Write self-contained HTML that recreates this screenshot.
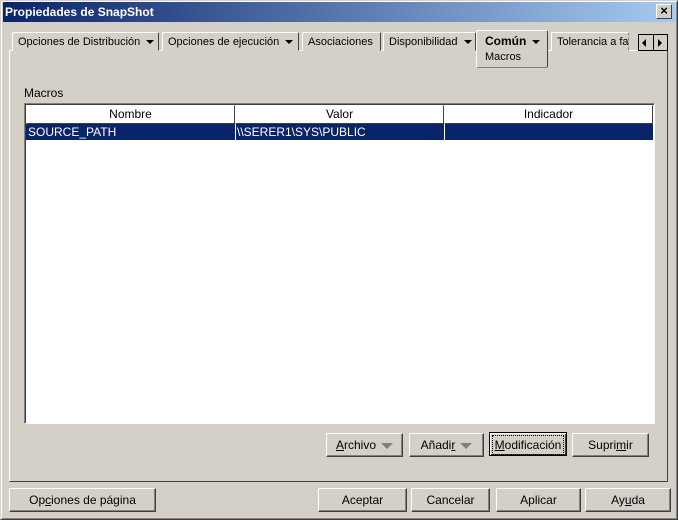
<!DOCTYPE html>
<html><head><meta charset="utf-8"><style>
*{box-sizing:border-box;margin:0;padding:0}
body{width:678px;height:520px;background:#d4d0c8;font:12px "Liberation Sans",sans-serif;color:#000;position:relative;overflow:hidden}
.a{position:absolute}
.win{left:0;top:0;width:678px;height:520px;border:1px solid;border-color:#d4d0c8 #404040 #404040 #d4d0c8;box-shadow:inset 1px 1px #fff,inset -1px -1px #808080}
.title{left:3px;top:2px;width:672px;height:20px;background:linear-gradient(90deg,#0a246a,#a6caf0);color:#fff;font-weight:bold;font-size:12px;line-height:20px;padding-left:2px}
.x{left:656px;top:4px;width:16px;height:15px;background:#d4d0c8;border:1px solid;border-color:#fff #404040 #404040 #fff;font-size:13px;line-height:12px;text-align:center;color:#000;font-weight:bold}
.tab{top:32px;height:19px;border:1px solid;border-color:#fff #404040 transparent #fff;border-radius:2px 2px 0 0;padding-left:5px;line-height:18px;white-space:nowrap;overflow:hidden;background:#d4d0c8;font-size:11px}
.tri{display:inline-block;width:0;height:0;border-left:4px solid transparent;border-right:4px solid transparent;border-top:4px solid #000;vertical-align:middle;margin-left:6px}
.panel{left:9px;top:50px;width:659px;height:432px;border:1px solid;border-color:#fff #404040 #404040 #fff}
.btn{height:24px;border:1px solid;border-color:#fff #404040 #404040 #fff;box-shadow:inset -1px -1px #808080;text-align:center;line-height:22px;background:#d4d0c8}
.th{top:105px;height:19px;border:1px solid;border-color:#fff #404040 #404040 #fff;text-align:center;line-height:17px}
.gt{display:inline-block;width:0;height:0;border-left:6px solid transparent;border-right:6px solid transparent;border-top:6px solid #808080;vertical-align:middle;margin-left:5px}
</style></head><body>
<div class="a win"></div>
<div class="a title">Propiedades de SnapShot</div>
<div class="a x">×</div>
<div class="a panel"></div>
<div class="a tab" style="left:12px;width:147px">Opciones de Distribución<span class="tri"></span></div>
<div class="a tab" style="left:162px;width:137px">Opciones de ejecución<span class="tri"></span></div>
<div class="a tab" style="left:302px;width:79px">Asociaciones</div>
<div class="a tab" style="left:383px;width:93px">Disponibilidad<span class="tri"></span></div>
<div class="a tab" style="left:551px;width:78px;border-right:1px dashed #808080">Tolerancia a fal</div>
<div class="a" style="left:476px;top:30px;width:72px;height:38px;border:1px solid;border-color:#fff #404040 #808080 #fff;border-radius:2px;background:#d4d0c8;padding-left:8px;line-height:21px"><b>Común</b><span class="tri"></span><div style="line-height:11px;font-size:11px">Macros</div></div>
<div class="a" style="left:638px;top:34px;width:30px;height:17px;border:1px solid #000;background:#d4d0c8">
<div class="a" style="left:3px;top:4px;border-top:4px solid transparent;border-bottom:4px solid transparent;border-right:4px solid #000"></div>
<div class="a" style="left:14px;top:0;width:1px;height:15px;background:#000"></div>
<div class="a" style="left:19px;top:4px;border-top:4px solid transparent;border-bottom:4px solid transparent;border-left:4px solid #000"></div></div>
<div class="a" style="left:24px;top:86px">Macros</div>
<div class="a" style="left:24px;top:103px;width:631px;height:321px;background:#fff;border:1px solid;border-color:#808080 #fff #fff #808080;box-shadow:inset 1px 1px #404040"></div>
<div class="a th" style="left:26px;width:209px">Nombre</div>
<div class="a th" style="left:235px;width:209px">Valor</div>
<div class="a th" style="left:444px;width:209px">Indicador</div>
<div class="a" style="left:26px;top:124px;width:627px;height:16px;background:#0a246a;color:#fff;line-height:16px">
<span class="a" style="left:2px">SOURCE_PATH</span>
<span class="a" style="left:209px;top:0;width:1px;height:16px;background:#fff"></span>
<span class="a" style="left:211px">\\SERER1\SYS\PUBLIC</span>
<span class="a" style="left:418px;top:0;width:1px;height:16px;background:#fff"></span></div>
<div class="a btn" style="left:326px;top:433px;width:77px"><u>A</u>rchivo<span class="gt"></span></div>
<div class="a btn" style="left:409px;top:433px;width:75px">Añadi<u>r</u><span class="gt"></span></div>
<div class="a btn" style="left:489px;top:432px;width:78px;border:1px solid #000;box-shadow:inset 1px 1px #fff,inset -1px -1px #404040;padding:2px"><div style="border:1px dotted #000;line-height:18px"><u>M</u>odificación</div></div>
<div class="a btn" style="left:572px;top:433px;width:77px">Supri<u>m</u>ir</div>
<div class="a btn" style="left:9px;top:488px;width:147px">Op<u>c</u>iones de página</div>
<div class="a btn" style="left:318px;top:488px;width:89px">Aceptar</div>
<div class="a btn" style="left:411px;top:488px;width:79px">Cancelar</div>
<div class="a btn" style="left:496px;top:488px;width:85px">Aplicar</div>
<div class="a btn" style="left:585px;top:488px;width:86px">Ay<u>u</u>da</div>
</body></html>
